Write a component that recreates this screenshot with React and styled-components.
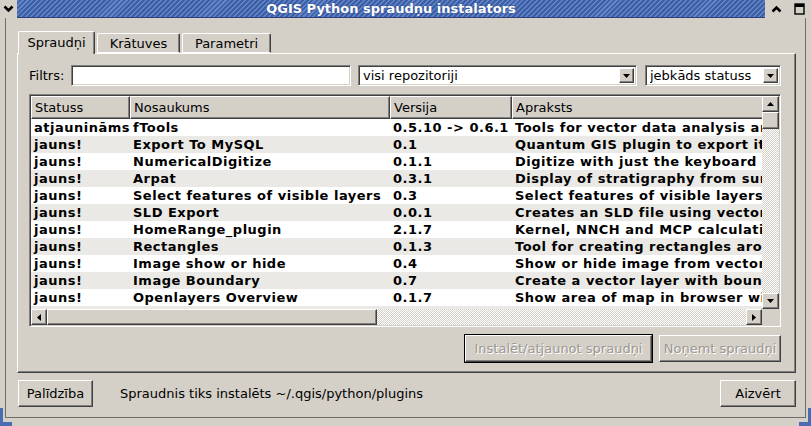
import React from 'react';
import styled, { createGlobalStyle } from 'styled-components';

const Global = createGlobalStyle`
  html, body { margin: 0; padding: 0; background: #d4d0c8; }
  body { font-family: "DejaVu Sans", "Noto Sans", sans-serif; font-size: 13px; color: #000; }
  * { box-sizing: border-box; }
`;

const BG = '#d4d0c8';

const Window = styled.div`
  width: 811px;
  height: 426px;
  display: flex;
  flex-direction: column;
  background: ${BG};
  position: relative;
  overflow: hidden;
  &::before, &::after {
    content: '';
    position: absolute;
    bottom: 0;
    width: 9px;
    height: 14px;
    border-bottom: 4px solid #4a6cb0;
  }
  &::before { left: 0; border-left: 3px solid #4a6cb0; }
  &::after { right: 0; border-right: 3px solid #4a6cb0; }
`;

const TitleBar = styled.div`
  height: 18px;
  display: flex;
  flex-shrink: 0;
`;

const TitleButton = styled.div`
  width: ${p => p.$w}px;
  display: flex;
  align-items: center;
  justify-content: center;
  background: ${BG};
`;

const TitleText = styled.div`
  flex: 1;
  display: flex;
  align-items: center;
  justify-content: center;
  color: #fff;
  font-weight: bold;
  font-size: 13px;
  background: repeating-linear-gradient(135deg, #6283c6 0 1.5px, #3d5fa6 1.5px 3.5px);
  border-bottom: 1px solid #27427e;
  text-shadow: 0 0 2px #2a4688;
`;

const Body = styled.div`
  flex: 1;
  display: flex;
  flex-direction: column;
  margin: 0 5px 8px 5px;
  border: 1px solid #6e6c68;
  border-top: none;
  padding: 13px 9px 10px 11px;
`;

const TabBar = styled.div`
  height: 22px;
  display: flex;
  align-items: flex-end;
  gap: 2px;
  padding-left: 1px;
  position: relative;
  z-index: 1;
`;

const Tab = styled.div`
  width: ${p => p.$w}px;
  height: ${p => (p.$active ? 23 : 20)}px;
  margin-bottom: ${p => (p.$active ? -1 : 0)}px;
  display: flex;
  align-items: center;
  justify-content: center;
  padding-bottom: ${p => (p.$active ? 1 : 0)}px;
  background: ${BG};
  border-top: 1px solid #fff;
  border-left: 1px solid #fff;
  border-right: 1px solid #404040;
  box-shadow: inset -1px 0 #808080;
  border-radius: 2px 2px 0 0;
  ${p => !p.$active && 'border-bottom: 1px solid #fff;'}
`;

const Panel = styled.div`
  height: 320px;
  display: flex;
  flex-direction: column;
  border-top: 1px solid #fff;
  border-left: 1px solid #fff;
  border-right: 1px solid #404040;
  border-bottom: 1px solid #404040;
  box-shadow: inset -1px -1px #808080;
  padding: 11px 14px 0 11px;
`;

const FilterRow = styled.div`
  height: 21px;
  display: flex;
  align-items: center;
`;

const Label = styled.span`
  width: 42px;
  flex-shrink: 0;
`;

const Field = styled.div`
  width: ${p => p.$w}px;
  height: 21px;
  margin-left: ${p => p.$ml || 0}px;
  flex-shrink: 0;
  display: flex;
  align-items: center;
  background: #fff;
  border: 1px solid;
  border-color: #808080 #fff #fff #808080;
  box-shadow: inset 1px 1px #404040, inset -1px -1px ${BG};
  padding: 0 2px 0 4px;
  overflow: hidden;
  white-space: nowrap;
`;

const FieldText = styled.span`
  flex: 1;
  overflow: hidden;
`;

const ArrowButton = styled.div`
  width: ${p => p.$w || 16}px;
  height: ${p => p.$h || 16}px;
  flex-shrink: 0;
  display: flex;
  align-items: center;
  justify-content: center;
  background: ${BG};
  border: 1px solid;
  border-color: #fff #404040 #404040 #fff;
  box-shadow: inset -1px -1px #808080;
`;

const Table = styled.div`
  height: 233px;
  margin-top: 8px;
  display: grid;
  grid-template-columns: 1fr 17px;
  grid-template-rows: 1fr 16px;
  border: 1px solid;
  border-color: #808080 #fff #fff #808080;
  box-shadow: inset 1px 1px #404040, inset -1px -1px ${BG};
  padding: 1px 1px 1px 1px;
  background: #fff;
`;

const Viewport = styled.div`
  overflow: hidden;
  background: #fff;
`;

const cols = '99px 260px 122px 400px';

const HeaderRow = styled.div`
  display: grid;
  grid-template-columns: ${cols};
  height: 23px;
`;

const HeaderCell = styled.div`
  display: flex;
  align-items: center;
  padding-left: 3px;
  background: ${BG};
  border: 1px solid;
  border-color: #fff #404040 #404040 #fff;
  box-shadow: inset -1px -1px #808080;
  white-space: nowrap;
  overflow: hidden;
`;

const Row = styled.div`
  display: grid;
  grid-template-columns: ${cols};
  height: 17px;
  line-height: 17px;
  font-weight: bold;
  letter-spacing: 0.5px;
  background: ${p => (p.$alt ? '#ebe9e5' : '#fff')};
`;

const Cell = styled.div`
  padding-left: 3px;
  white-space: nowrap;
  overflow: hidden;
`;

const VScroll = styled.div`
  display: flex;
  flex-direction: column;
  background-color: #fff;
  background-image: repeating-conic-gradient(${BG} 0 25%, #fff 0 50%);
  background-size: 2px 2px;
`;

const HScroll = styled.div`
  display: flex;
  background-color: #fff;
  background-image: repeating-conic-gradient(${BG} 0 25%, #fff 0 50%);
  background-size: 2px 2px;
`;

const Thumb = styled.div`
  width: ${p => p.$w || 17}px;
  height: ${p => p.$h || 16}px;
  flex-shrink: 0;
  background: ${BG};
  border: 1px solid;
  border-color: #fff #404040 #404040 #fff;
  box-shadow: inset -1px -1px #808080;
`;

const Spacer = styled.div`
  flex: 1;
`;

const Corner = styled.div`
  background: ${BG};
`;

const ActionRow = styled.div`
  display: flex;
  justify-content: flex-end;
  gap: 7px;
  margin-top: 8px;
`;

const Button = styled.div`
  width: ${p => p.$w}px;
  height: 27px;
  flex-shrink: 0;
  display: flex;
  align-items: center;
  justify-content: center;
  background: ${BG};
  border: 1px solid;
  border-color: #fff #404040 #404040 #fff;
  box-shadow: inset -1px -1px #808080 ${p => (p.$default ? ', 0 0 0 1px #000' : '')};
  color: ${p => (p.$disabled ? '#9c9893' : '#000')};
  text-shadow: ${p => (p.$disabled ? '1px 1px 0 #fff' : 'none')};
  white-space: nowrap;
`;

const BottomRow = styled.div`
  display: flex;
  align-items: center;
  margin-top: 7px;
  padding-left: 1px;
`;

const Status = styled.span`
  flex: 1;
  margin-left: 27px;
`;

const Tri = ({ dir }) => {
  const pts = {
    down: '0,0 7,0 3.5,4',
    up: '0,4 7,4 3.5,0',
    left: '4,0 4,7 0,3.5',
    right: '0,0 0,7 4,3.5',
  }[dir];
  const vertical = dir === 'up' || dir === 'down';
  return (
    <svg width={vertical ? 7 : 4} height={vertical ? 4 : 7} viewBox={vertical ? '0 0 7 4' : '0 0 4 7'}>
      <polygon points={pts} fill="#000" />
    </svg>
  );
};

const rows = [
  ['atjaunināms', 'fTools', '0.5.10 -> 0.6.1', 'Tools for vector data analysis and management'],
  ['jauns!', 'Export To MySQL', '0.1', 'Quantum GIS plugin to export it to MySQL'],
  ['jauns!', 'NumericalDigitize', '0.1.1', 'Digitize with just the keyboard and coordinates'],
  ['jauns!', 'Arpat', '0.3.1', 'Display of stratigraphy from survey data'],
  ['jauns!', 'Select features of visible layers', '0.3', 'Select features of visible layers by rectangle'],
  ['jauns!', 'SLD Export', '0.0.1', 'Creates an SLD file using vector layer style'],
  ['jauns!', 'HomeRange_plugin', '2.1.7', 'Kernel, NNCH and MCP calculation for home ranges'],
  ['jauns!', 'Rectangles', '0.1.3', 'Tool for creating rectangles around features'],
  ['jauns!', 'Image show or hide', '0.4', 'Show or hide image from vector layer'],
  ['jauns!', 'Image Boundary', '0.7', 'Create a vector layer with boundary of images'],
  ['jauns!', 'Openlayers Overview', '0.1.7', 'Show area of map in browser with OpenLayers'],
  ['jauns!', 'Pan to point', '0.1', 'Allows to pan the map to a given point'],
];

export default function App() {
  return (
    <>
      <Global />
      <Window>
        <TitleBar>
          <TitleButton $w={17}>
            <svg width="11" height="8" viewBox="0 0 11 8">
              <polyline points="1.5,1.5 5.5,5.5 9.5,1.5" fill="none" stroke="#000" strokeWidth="2.6" />
            </svg>
          </TitleButton>
          <TitleText>QGIS Python spraudņu instalators</TitleText>
          <TitleButton $w={22}>
            <svg width="11" height="8" viewBox="0 0 11 8">
              <polyline points="1.5,6.5 5.5,2.5 9.5,6.5" fill="none" stroke="#000" strokeWidth="2.6" />
            </svg>
          </TitleButton>
          <TitleButton $w={24}>
            <svg width="11" height="12" viewBox="0 0 11 12">
              <rect x="1" y="1" width="9" height="10" fill="none" stroke="#000" strokeWidth="1.4" />
              <rect x="1" y="1" width="9" height="3" fill="#000" />
            </svg>
          </TitleButton>
        </TitleBar>
        <Body>
          <TabBar>
            <Tab $w={77} $active>Spraudņi</Tab>
            <Tab $w={83}>Krātuves</Tab>
            <Tab $w={89}>Parametri</Tab>
          </TabBar>
          <Panel>
            <FilterRow>
              <Label>Filtrs:</Label>
              <Field $w={280} />
              <Field $w={279} $ml={7}>
                <FieldText>visi repozitoriji</FieldText>
                <ArrowButton $w={15} $h={15}><Tri dir="down" /></ArrowButton>
              </Field>
              <Field $w={136} $ml={8}>
                <FieldText>jebkāds statuss</FieldText>
                <ArrowButton $w={15} $h={15}><Tri dir="down" /></ArrowButton>
              </Field>
            </FilterRow>
            <Table>
              <Viewport>
                <HeaderRow>
                  <HeaderCell>Statuss</HeaderCell>
                  <HeaderCell>Nosaukums</HeaderCell>
                  <HeaderCell>Versija</HeaderCell>
                  <HeaderCell>Apraksts</HeaderCell>
                </HeaderRow>
                {rows.map((r, i) => (
                  <Row key={i} $alt={i % 2 === 1}>
                    {r.map((c, j) => (
                      <Cell key={j}>{c}</Cell>
                    ))}
                  </Row>
                ))}
              </Viewport>
              <VScroll>
                <ArrowButton $w={17} $h={16}><Tri dir="up" /></ArrowButton>
                <Thumb $w={17} $h={17} />
                <Spacer />
                <ArrowButton $w={17} $h={16}><Tri dir="down" /></ArrowButton>
              </VScroll>
              <HScroll>
                <ArrowButton $w={16} $h={16}><Tri dir="left" /></ArrowButton>
                <Thumb $w={330} $h={16} />
                <Spacer />
                <ArrowButton $w={16} $h={16}><Tri dir="right" /></ArrowButton>
              </HScroll>
              <Corner />
            </Table>
            <ActionRow>
              <Button $w={187} $disabled $default>Instalēt/atjaunot spraudņi</Button>
              <Button $w={122} $disabled>Noņemt spraudņi</Button>
            </ActionRow>
          </Panel>
          <BottomRow>
            <Button $w={75}>Palīdzība</Button>
            <Status>Spraudnis tiks instalēts ~/.qgis/python/plugins</Status>
            <Button $w={76}>Aizvērt</Button>
          </BottomRow>
        </Body>
      </Window>
    </>
  );
}
